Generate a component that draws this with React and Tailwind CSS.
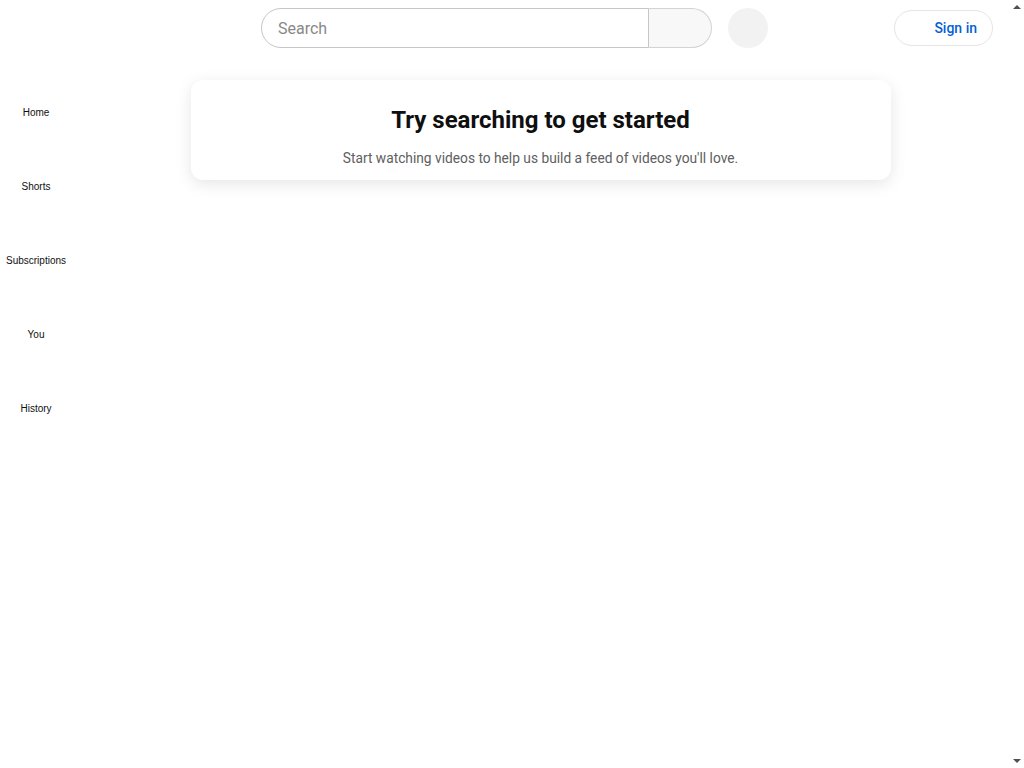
import React from "react";

const navItems = ["Home", "Shorts", "Subscriptions", "You", "History"];

function Header() {
  return (
    <header className="flex h-14 items-center px-4">
      {/* logo slot (empty) */}
      <div className="w-[245px] shrink-0" />
      <form className="flex h-10 w-[451px] shrink-0" onSubmit={(e) => e.preventDefault()}>
        <input
          type="text"
          placeholder="Search"
          className="h-10 w-[388px] rounded-l-full border border-[#c6c6c6] bg-white pl-4 text-base text-[#0f0f0f] outline-none placeholder:text-[#888888]"
        />
        <button
          type="submit"
          className="h-10 w-[63px] rounded-r-full border border-l-0 border-[#d3d3d3] bg-[#f8f8f8]"
        />
      </form>
      <button className="ml-[16px] h-10 w-10 shrink-0 rounded-full bg-[#f2f2f2]" />
      <div className="flex-1" />
      <button className="flex h-9 w-[99px] items-center justify-end rounded-full border border-[#e5e5e5] pr-[15px] text-sm font-medium text-[#065fd4]">
        Sign in
      </button>
    </header>
  );
}

function Sidebar() {
  return (
    <nav className="w-[72px] shrink-0 pt-[5px] font-['Liberation_Sans',Arial,sans-serif]">
      {navItems.map((label) => (
        <a
          key={label}
          href="#"
          className="flex h-[74px] flex-col items-center pt-4 text-[10px] leading-3 text-[#0f0f0f]"
        >
          <span className="mb-[6px] h-6 w-6" />
          <span className="whitespace-nowrap">{label}</span>
        </a>
      ))}
    </nav>
  );
}

// page scrollbar gutter with its arrow buttons
function ScrollGutter() {
  return (
    <div className="fixed top-0 right-0 flex h-screen w-[15px] flex-col items-center justify-between bg-white py-[5px]">
      <span className="h-0 w-0 border-x-[4px] border-b-[4px] border-x-transparent border-b-[#505050]" />
      <span className="h-0 w-0 border-x-[4px] border-t-[4px] border-x-transparent border-t-[#505050]" />
    </div>
  );
}

export default function App() {
  return (
    <div className="min-h-screen bg-white pr-[15px] font-[Roboto,sans-serif]">
      <Header />
      <div className="flex">
        <Sidebar />
        <main className="flex flex-1 justify-center">
          <div className="mt-6 flex h-[100px] w-[700px] flex-col items-center rounded-xl bg-white pt-[24px] shadow-[0_4px_16px_rgba(0,0,0,0.1)]">
            <h2 className="text-2xl font-bold leading-8 text-[#0f0f0f]">
              Try searching to get started
            </h2>
            <p className="mt-[12px] text-[13.75px] leading-5 text-[#606060]">
              Start watching videos to help us build a feed of videos you'll love.
            </p>
          </div>
        </main>
      </div>
      <ScrollGutter />
    </div>
  );
}
